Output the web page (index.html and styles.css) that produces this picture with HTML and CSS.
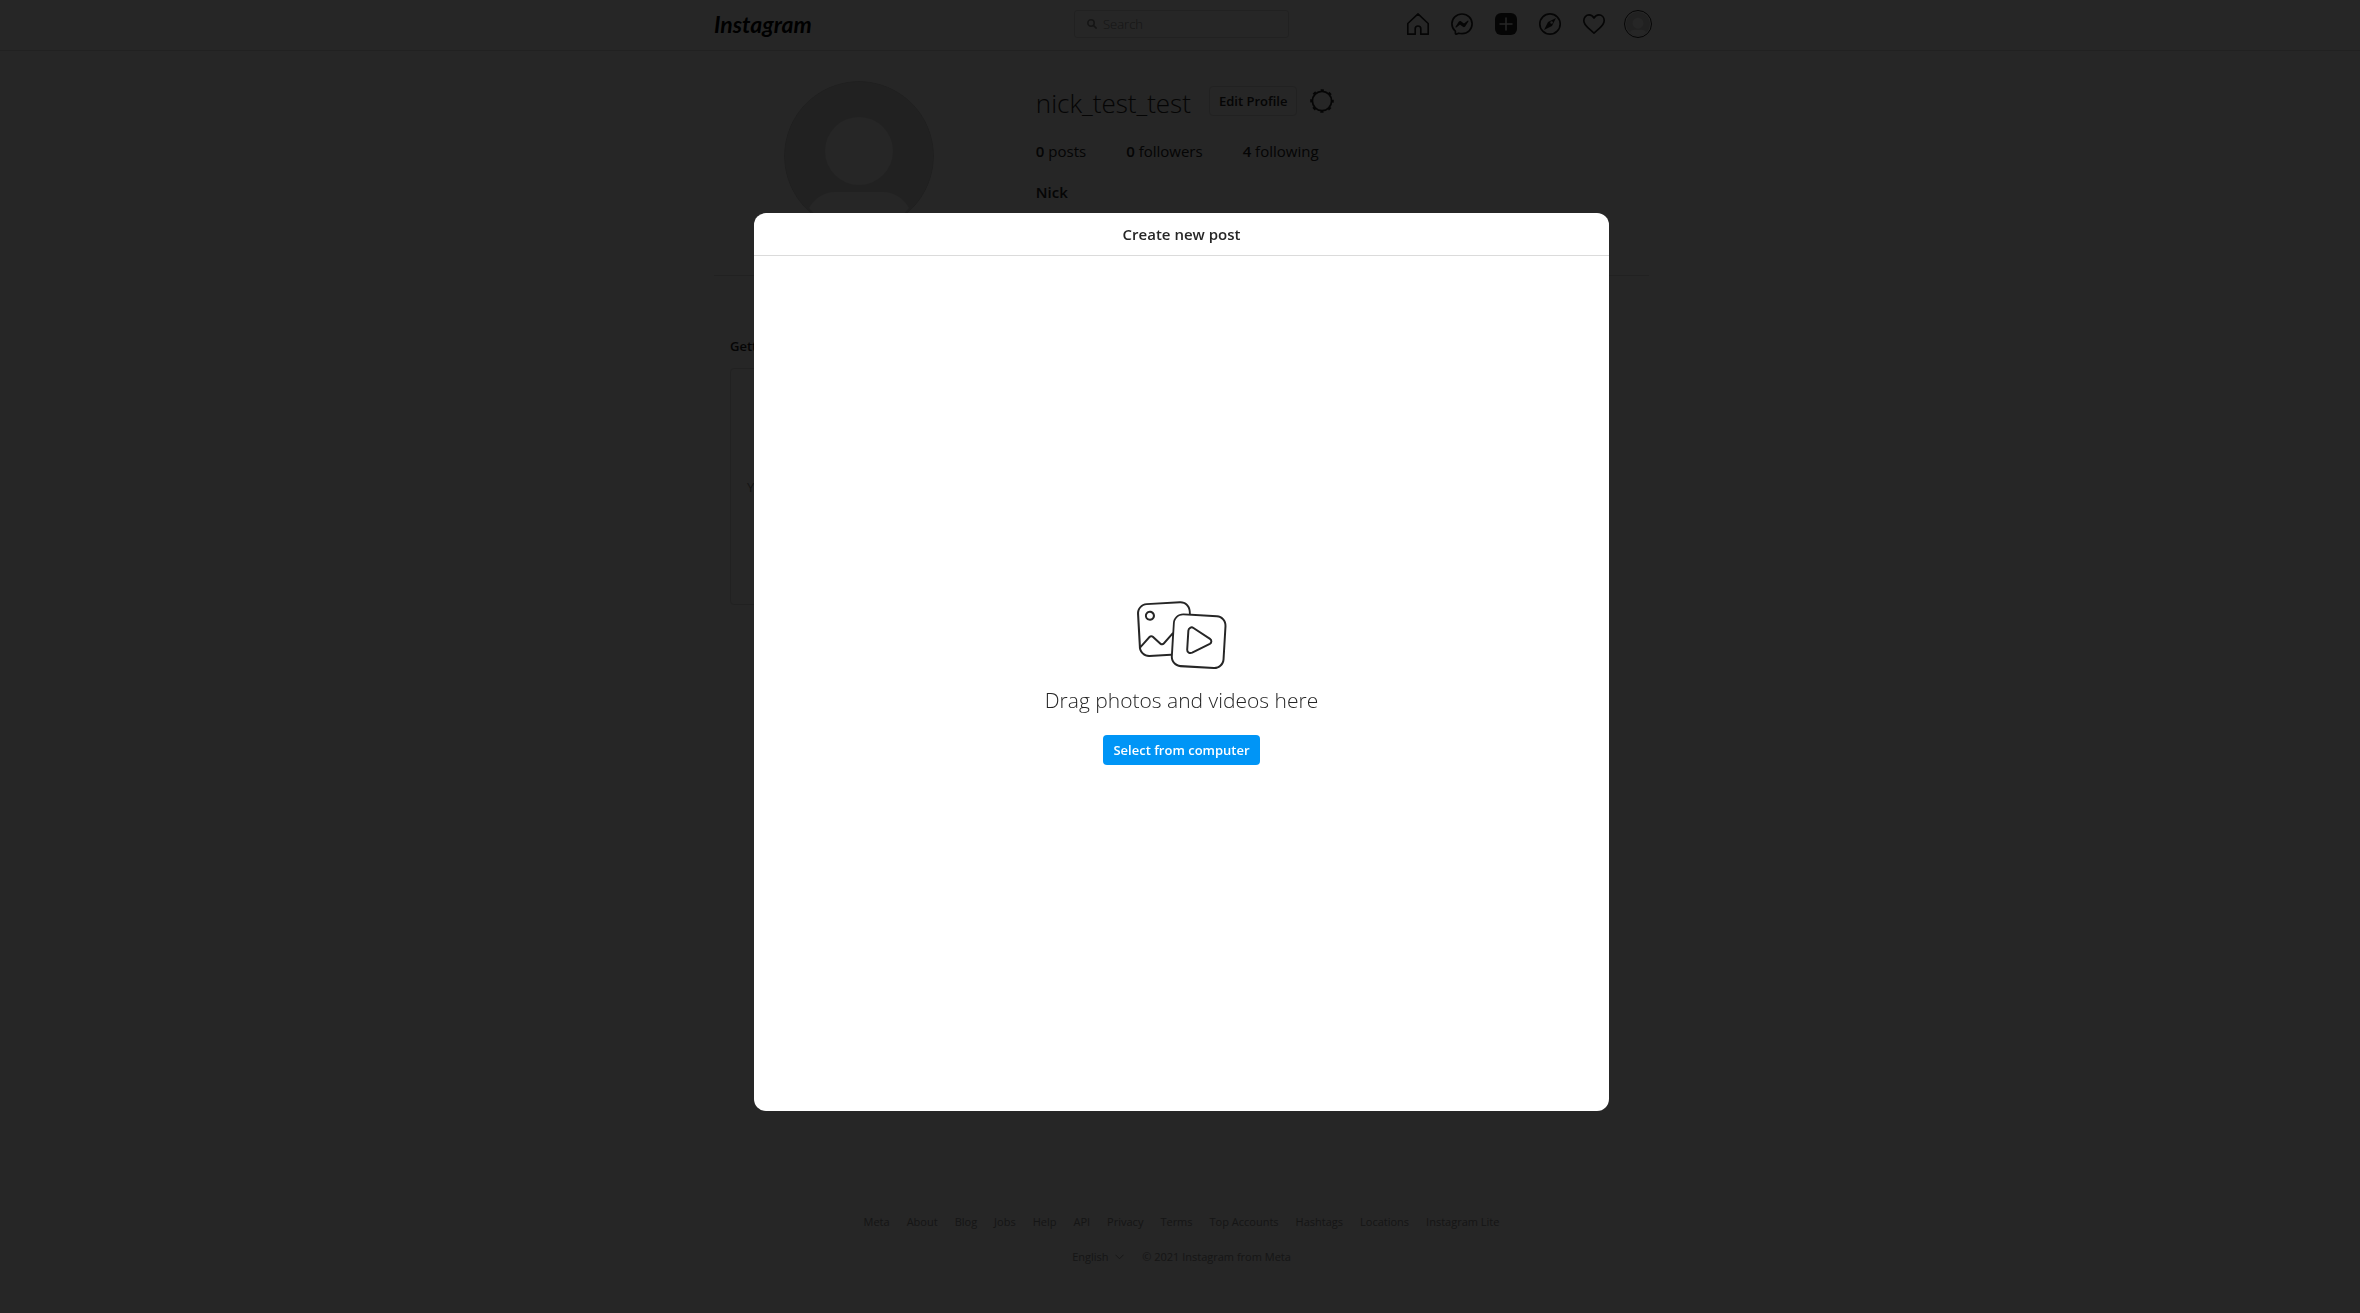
FILE: index.html
```html
<!DOCTYPE html>
<html lang="en">
<head>
<meta charset="utf-8">
<title>Create new post • Instagram</title>
<link rel="stylesheet" href="styles.css">
</head>
<body>
<header class="topbar">
  <div class="topbar-inner">
    <div class="brand"><a class="logo" href="#">Instagram</a></div>
    <label class="search">
      <svg width="10" height="10" viewBox="0 0 10 10" fill="none" stroke="currentColor" stroke-width="1.6"><circle cx="4" cy="4" r="3.2"/><path d="M6.4 6.4 9.6 9.6"/></svg>
      <input type="search" aria-label="Search" placeholder="Search">
    </label>
    <nav class="icons">
      <a href="#" aria-label="Home"><svg width="24" height="24" viewBox="0 0 24 24" fill="none" stroke="currentColor" stroke-width="1.7" stroke-linejoin="round"><path d="M9.2 22.2v-5.4a2.8 2.8 0 0 1 5.6 0v5.4h7.4V11.5L12 1.9 1.8 11.5v10.7z"/></svg></a>
      <a href="#" aria-label="Messenger"><svg width="24" height="24" viewBox="0 0 24 24" fill="none" stroke="currentColor" stroke-width="1.7" stroke-linejoin="round"><path d="M12 2C6.3 2 1.9 6.2 1.9 11.7c0 2.9 1.2 5.4 3.2 7.2.2.2.3.4.3.6v2c0 .5.6.8 1 .6l2.3-.9c1 .3 2.1.4 3.3.4 5.7 0 10.1-4.2 10.1-9.8S17.7 2 12 2z"/><path fill="currentColor" stroke="none" d="m5.500 14.700 3.200-5c.5-.8 1.600-1 2.300-.4l2.500 1.900c.2.2.5.2.8 0l3.300-2.500c.5-.4 1.100.2.8.7l-3.200 5c-.5.8-1.600 1-2.300.4l-2.500-1.900c-.2-.2-.5-.2-.8 0l-3.300 2.500c-.5.4-1.100-.2-.8-.7z"/></svg></a>
      <a href="#" aria-label="New post"><svg width="24" height="24" viewBox="0 0 24 24"><rect x="1" y="1" width="22" height="22" rx="6" fill="currentColor"/><path d="M12 6v12M6 12h12" stroke="#fff" stroke-width="1.5" stroke-linecap="round"/></svg></a>
      <a href="#" aria-label="Explore"><svg width="24" height="24" viewBox="0 0 24 24" fill="none" stroke="currentColor" stroke-width="1.7"><circle cx="12" cy="12" r="10.2"/><path fill="currentColor" fill-rule="evenodd" stroke="none" d="M18 6 14 14 6 18 10 10zM13.600 9.200a1.300 1.300 0 1 0 .01 2.600 1.300 1.300 0 0 0 0-2.600z"/></svg></a>
      <a href="#" aria-label="Activity"><svg width="24" height="24" viewBox="0 0 24 24" fill="none" stroke="currentColor" stroke-width="1.7" stroke-linejoin="round"><path d="M12 6C10.8 3.8 9 2.900 7.100 2.900 4.100 2.900 1.800 5.400 1.800 8.600c0 3.200 1.900 5.200 4.600 7.600L12 21.200l5.600-5c2.700-2.400 4.600-4.400 4.600-7.600 0-3.200-2.300-5.700-5.300-5.700C15 2.900 13.200 3.800 12 6z"/></svg></a>
      <a class="me" href="#" aria-label="Profile"><svg width="24" height="24" viewBox="0 0 150 150"><use href="#person"/></svg></a>
    </nav>
  </div>
</header>

<main class="page">
  <section class="profile">
    <div class="photo">
      <svg width="150" height="150" viewBox="0 0 150 150">
        <defs><clipPath id="round"><circle cx="75" cy="75" r="75"/></clipPath></defs>
        <g id="person" clip-path="url(#round)">
          <circle cx="75" cy="75" r="74.5" fill="#dbdbdb" stroke="#d0d0d0"/>
          <circle cx="75" cy="70" r="34" fill="#fafafa"/>
          <path d="M25 127c5-9 14-16 26-16h48c12 0 21 7 26 16-12 14-28 24-50 24s-38-10-50-24z" fill="#fafafa"/>
        </g>
      </svg>
    </div>
    <div class="info">
      <div class="name-row">
        <h1 class="username">nick_test_test</h1>
        <button class="edit" type="button">Edit Profile</button>
        <button class="gear" type="button" aria-label="Options"><svg width="24" height="24" viewBox="0 0 24 24" fill="none" stroke="currentColor"><circle cx="12" cy="12" r="9.6" stroke-width="1.8"/><circle cx="12" cy="12" r="10.7" stroke-width="2.2" stroke-dasharray="3.2 5.2" stroke-dashoffset="1.6"/></svg></button>
      </div>
      <ul class="stats">
        <li><b>0</b> posts</li>
        <li><b>0</b> followers</li>
        <li><b>4</b> following</li>
      </ul>
      <p class="fullname">Nick</p>
    </div>
  </section>
  <section class="started">
    <h2>Getting Started</h2>
    <div class="card">You</div>
  </section>
</main>

<footer class="footer">
  <nav class="links">
    <a href="#">Meta</a><a href="#">About</a><a href="#">Blog</a><a href="#">Jobs</a><a href="#">Help</a><a href="#">API</a><a href="#">Privacy</a><a href="#">Terms</a><a href="#">Top Accounts</a><a href="#">Hashtags</a><a href="#">Locations</a><a href="#">Instagram Lite</a>
  </nav>
  <div class="legal">
    <label class="language">
      <select aria-label="Language"><option>English</option></select>
      <svg width="9" height="6" viewBox="0 0 9 6" fill="none" stroke="currentColor"><path d="M.5.8l4 4 4-4"/></svg>
    </label>
    <span>© 2021 Instagram from Meta</span>
  </div>
</footer>

<div class="overlay">
  <div class="dialog" role="dialog" aria-labelledby="dialog-title">
    <h2 class="dialog-title" id="dialog-title">Create new post</h2>
    <div class="drop">
      <svg width="96" height="76" viewBox="0 0 98 77" fill="currentColor">
        <path d="M16.300 24h.3c2.800-.2 4.900-2.600 4.800-5.400-.2-2.800-2.600-4.900-5.400-4.800s-4.900 2.600-4.800 5.400c.1 2.700 2.400 4.800 5.100 4.800zm-2.400-7.200c.5-.6 1.300-1 2.100-1h.2c1.700 0 3.100 1.400 3.100 3.100 0 1.700-1.400 3.100-3.100 3.100-1.700 0-3.100-1.400-3.100-3.100 0-.8.3-1.500.8-2.100z"/>
        <path d="M84.700 18.400 58 16.900l-.2-3c-.3-5.700-5.200-10.100-11-9.800L12.900 6c-5.700.3-10.100 5.300-9.800 11L5 51v.8c.7 5.200 5.100 9.100 10.300 9.100h.6l21.700-1.200v.6c-.3 5.700 4 10.700 9.800 11l34 2h.6c5.500 0 10.100-4.300 10.400-9.800l2-34c.4-5.800-4-10.700-9.700-11.100zM7.200 10.800C8.700 9.100 10.800 8.100 13 8l34-1.900c4.600-.3 8.600 3.300 8.900 7.900l.2 2.800-5.300-.3c-5.700-.3-10.700 4-11 9.800l-.6 9.500-9.500 10.700c-.2.3-.6.4-1 .5-.4 0-.7-.1-1-.4l-7.800-7c-1.400-1.300-3.500-1.100-4.800.3L7 49 5.200 17c-.2-2.300.6-4.500 2-6.200zm8.700 48c-4.300.2-8.100-2.800-8.800-7.100l9.400-10.500c.2-.3.6-.4 1-.5.4 0 .7.1 1 .4l7.800 7c.7.6 1.600.9 2.500.9.9 0 1.700-.5 2.300-1.100l7.800-8.800-1.100 18.600-21.900 1.100zm76.500-29.500-2 34c-.3 4.600-4.300 8.200-8.900 7.900l-34-2c-4.600-.3-8.200-4.300-7.900-8.900l2-34c.3-4.400 3.900-7.900 8.400-7.900h.5l34 2c4.700.3 8.200 4.300 7.900 8.900z"/>
        <path d="M60.700 31.300 77.600 42.400c1.900 1.300 1.800 4-.2 5.100l-18 9c-2.500 1.100-5.200-.3-5.100-3l1.200-19.500c.2-2.600 3-4.200 5.200-2.700z" fill="none" stroke="currentColor" stroke-width="2"/>
      </svg>
      <p class="hint">Drag photos and videos here</p>
      <button class="select" type="button">Select from computer</button>
    </div>
  </div>
</div>
</body>
</html>
```

FILE: styles.css
```css
* { box-sizing: border-box; }

body {
  margin: 0;
  padding-left: 3px;
  min-height: 100vh;
  display: flex;
  flex-direction: column;
  background: #fafafa;
  color: #262626;
  font: 13px/18px "Open Sans", "Noto Sans", sans-serif;
}

h1, h2, p, ul { margin: 0; padding: 0; }
a { color: inherit; text-decoration: none; }
svg { display: block; flex: none; }
button { font: inherit; color: inherit; cursor: pointer; }

.topbar {
  height: 51px;
  margin-left: -3px;
  padding-left: 3px;
  background: #fff;
  border-bottom: 1px solid #dbdbdb;
}
.topbar-inner {
  max-width: 975px;
  height: 48px;
  margin: 0 auto;
  padding: 0 20px;
  display: grid;
  grid-template-columns: 1fr 215px 1fr;
  align-items: center;
}
.brand { display: flex; }
.logo {
  font: italic bold 23px/30px Lato, sans-serif;
  color: #000;
}
.search {
  height: 28px;
  display: flex;
  align-items: center;
  gap: 6px;
  padding: 0 12px;
  border: 1px solid #dbdbdb;
  border-radius: 3px;
  background: #fafafa;
  color: #8e8e8e;
}
.search input {
  flex: 1;
  min-width: 0;
  padding: 0;
  border: 0;
  outline: 0;
  background: none;
  font: 300 13px/18px "Open Sans", sans-serif;
}
.search input::placeholder { color: #8e8e8e; opacity: 1; }
.icons {
  display: flex;
  justify-content: flex-end;
  align-items: center;
  gap: 20px;
  margin-right: -3px;
}
.icons .me {
  margin-left: -2px;
  padding: 1px;
  border: 1px solid #262626;
  border-radius: 50%;
}

.page {
  width: 100%;
  max-width: 975px;
  margin: 0 auto;
  padding: 30px 20px 0;
}
.profile {
  display: grid;
  grid-template-columns: 31% 1fr;
  column-gap: 32px;
  height: 195px;
  border-bottom: 1px solid #dbdbdb;
}
.photo { display: flex; justify-content: center; }
.name-row { display: flex; align-items: center; height: 40px; }
.username {
  padding-top: 3px;
  font-size: 26px;
  line-height: 32px;
  font-weight: 300;
}
.edit {
  height: 30px;
  margin-left: 18px;
  padding: 0 9px;
  border: 1px solid #dbdbdb;
  border-radius: 4px;
  background: none;
  font-weight: 600;
}
.gear { margin-left: 13px; padding: 0; border: 0; background: none; }
.stats {
  display: flex;
  gap: 40px;
  margin-top: 18px;
  list-style: none;
  font-size: 15px;
  line-height: 24px;
}
.stats b, .fullname { font-weight: 600; }
.fullname { margin-top: 17px; font-size: 15px; line-height: 24px; }

.started { padding: 61px 16px 0; }
.started h2 { font-size: 13px; line-height: 18px; font-weight: 600; }
.card {
  display: flex;
  align-items: center;
  width: 25%;
  height: 237px;
  margin-top: 13px;
  padding: 0 16px;
  border: 1px solid #dbdbdb;
  border-radius: 4px;
  color: #8e8e8e;
}

.footer {
  margin-top: auto;
  padding-bottom: 48px;
  display: flex;
  flex-direction: column;
  align-items: center;
  gap: 19px;
  color: #8e8e8e;
  font-size: 11px;
  line-height: 16px;
}
.links { display: flex; gap: 17px; }
.legal { display: flex; gap: 18px; }
.language { display: flex; align-items: center; gap: 6px; }
.language select {
  appearance: none;
  padding: 0;
  border: 0;
  background: none;
  color: inherit;
  font: inherit;
}

.overlay {
  position: fixed;
  inset: 0;
  padding: 10px 0 0 3px;
  display: flex;
  align-items: center;
  justify-content: center;
  background: rgba(0, 0, 0, 0.85);
}
.dialog {
  width: min(855px, 100% - 40px);
  overflow: hidden;
  border-radius: 12px;
  background: #fff;
}
.dialog-title {
  padding: 9px 0;
  border-bottom: 1px solid #dbdbdb;
  text-align: center;
  font-size: 15px;
  line-height: 24px;
  font-weight: 600;
}
.drop {
  aspect-ratio: 1;
  display: flex;
  flex-direction: column;
  align-items: center;
  justify-content: center;
  padding-bottom: 4px;
}
.hint {
  margin: 14px 0 22px;
  font-size: 21px;
  line-height: 26px;
  font-weight: 300;
}
.select {
  height: 30px;
  padding: 0 10px;
  border: 0;
  border-radius: 4px;
  background: #0095f6;
  color: #fff;
  font-weight: 600;
}
```
